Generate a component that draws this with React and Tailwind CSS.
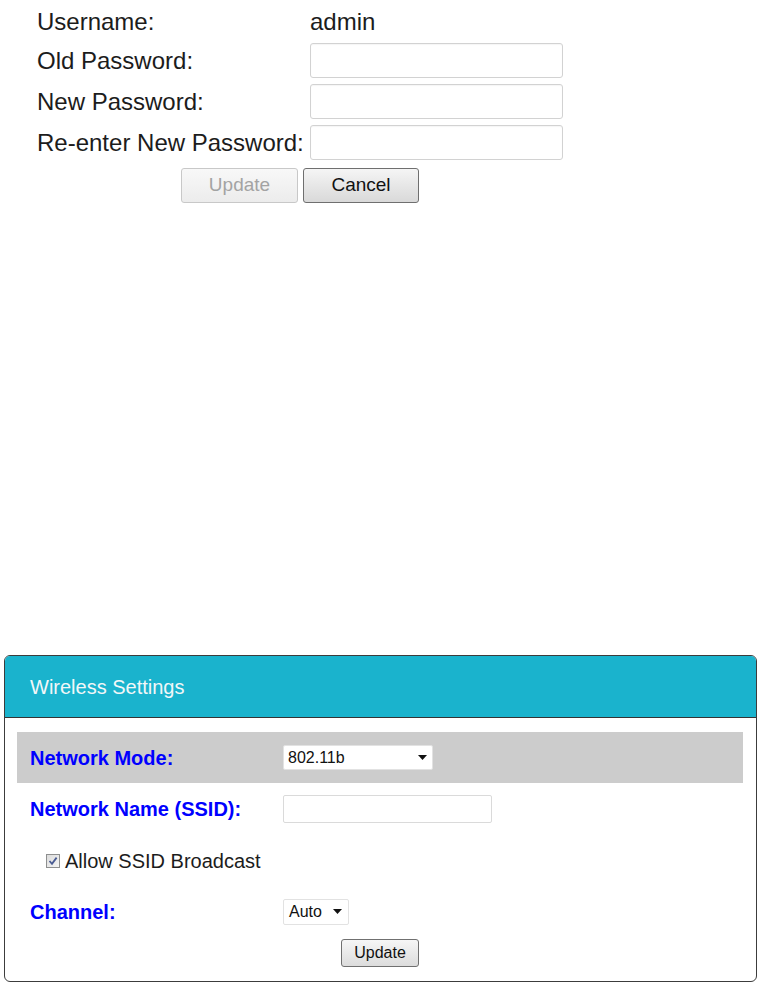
import React from "react";

function Arrow() {
  return (
    <svg width="9" height="5" viewBox="0 0 9 5" className="block">
      <path d="M0 0 L9 0 L4.5 5 Z" fill="#111" />
    </svg>
  );
}

function CheckBox() {
  return (
    <div className="w-[14px] h-[14px] border border-[#8e8f8f] bg-gradient-to-br from-[#dcdcdc] to-[#f4f4f4] flex items-center justify-center">
      <svg width="10" height="10" viewBox="0 0 10 10">
        <path d="M1.5 5 L4 7.8 L8.6 1.6" fill="none" stroke="#4a5c93" strokeWidth="1.8" />
      </svg>
    </div>
  );
}

function TopRow({ label, children }) {
  return (
    <div className="flex items-center h-[35px]">
      <div className="w-[273px] shrink-0 text-[24px] leading-none text-[#1c1c1c] whitespace-nowrap">{label}</div>
      {children}
    </div>
  );
}

function TextInput() {
  return <div className="w-[253px] shrink-0 h-[35px] border border-[#d2d2d2] rounded-[3px] bg-white shadow-[inset_0_1px_1px_rgba(0,0,0,0.04)]" />;
}

export default function App() {
  return (
    <div className="w-[766px] h-[989px] bg-white overflow-hidden" style={{ fontFamily: '"Liberation Sans", Arial, sans-serif' }}>
      <div className="pl-[37px] pt-[4px] w-[563px]">
        <TopRow label="Username:">
          <span className="text-[24px] leading-none text-[#1c1c1c]">admin</span>
        </TopRow>
        <div className="mt-[4px] flex flex-col gap-[6px]">
          <TopRow label="Old Password:"><TextInput /></TopRow>
          <TopRow label="New Password:"><TextInput /></TopRow>
          <TopRow label="Re-enter New Password:"><TextInput /></TopRow>
        </div>
        <div className="mt-[8px] flex justify-center gap-[5px]">
          <div className="w-[117px] h-[35px] border border-[#c8c8c8] rounded-[3px] bg-gradient-to-b from-[#f8f8f8] to-[#ececec] flex items-center justify-center text-[19px] text-[#a3a3a3]">
            Update
          </div>
          <div className="w-[116px] h-[35px] border border-[#6f6f6f] rounded-[3px] bg-gradient-to-b from-[#f5f5f5] to-[#d9d9d9] flex items-center justify-center text-[19px] text-[#111]">
            Cancel
          </div>
        </div>
      </div>

      <div className="ml-[4px] mt-[452px] w-[753px] border border-[#3c3c3c] rounded-[6px] overflow-hidden">
        <div className="h-[62px] bg-[#1ab3cd] border-b border-[#333] flex items-center pl-[25px] text-[20px] text-[#f2f7f8]">
          Wireless Settings
        </div>
        <div className="pt-[14px] pl-[12px] pr-[13px] pb-[14px]">
          <div className="h-[51px] bg-[#cccccc] flex items-center pl-[13px]">
            <div className="w-[253px] text-[20px] font-bold text-[#0000ff]">Network Mode:</div>
            <div className="w-[150px] h-[25px] bg-white border border-[#e2e2e2] rounded-[2px] flex items-center justify-between pl-[4px] pr-[5px] text-[16px] text-[#111]">
              <span>802.11b</span>
              <Arrow />
            </div>
          </div>
          <div className="h-[52px] flex items-center pl-[13px]">
            <div className="w-[253px] text-[20px] font-bold text-[#0000ff]">Network Name (SSID):</div>
            <div className="w-[209px] h-[28px] bg-white border border-[#dadada] rounded-[2px]" />
          </div>
          <div className="h-[51px] flex items-center pl-[29px] gap-[5px]">
            <CheckBox />
            <span className="text-[20px] text-[#1c1c1c]">Allow SSID Broadcast</span>
          </div>
          <div className="h-[51px] flex items-center pl-[13px]">
            <div className="w-[253px] text-[20px] font-bold text-[#0000ff]">Channel:</div>
            <div className="w-[66px] h-[26px] bg-white border border-[#e2e2e2] rounded-[2px] flex items-center justify-between pl-[5px] pr-[6px] text-[16px] text-[#111]">
              <span>Auto</span>
              <Arrow />
            </div>
          </div>
          <div className="mt-[2px] flex justify-center">
            <div className="w-[78px] h-[28px] border border-[#707070] rounded-[3px] bg-gradient-to-b from-[#f6f6f6] to-[#dcdcdc] flex items-center justify-center text-[16px] text-[#111]">
              Update
            </div>
          </div>
        </div>
      </div>
    </div>
  );
}
